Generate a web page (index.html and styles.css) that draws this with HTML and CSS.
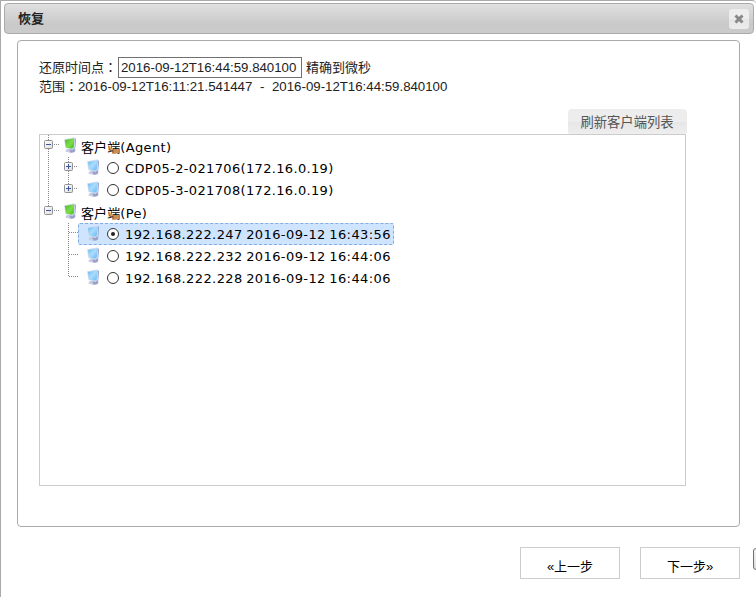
FILE: index.html
```html
<!DOCTYPE html>
<html lang="zh-CN">
<head>
<meta charset="utf-8">
<title>恢复</title>
<link rel="stylesheet" href="styles.css">
</head>
<body>
<svg class="defs" width="0" height="0">
  <defs>
    <linearGradient id="green" x1="0" y1="0" x2="1" y2="1"><stop offset="0" stop-color="#48b82c"/><stop offset=".55" stop-color="#7fdd48"/><stop offset="1" stop-color="#43bd28"/></linearGradient>
    <linearGradient id="blue" x1="0" y1="0" x2="1" y2="1"><stop offset="0" stop-color="#6bbaf0"/><stop offset=".5" stop-color="#a9dcfd"/><stop offset="1" stop-color="#67b9f2"/></linearGradient>
    <linearGradient id="box" x1="0" y1="0" x2="1" y2="1"><stop offset="0" stop-color="#fff"/><stop offset="1" stop-color="#dcdcdc"/></linearGradient>
    <symbol id="pc-body" viewBox="0 0 16 16">
      <path d="M3.6 13 L7 11 L13.7 12.2 L13 15 L9 16 L3.8 14.8Z" fill="#c9cde2"/>
      <path d="M7 12.6 L13.4 12.6 L12.4 15 L8.8 15.8Z" fill="#9c9fc8"/>
      <path d="M12 .8 L14 2 L13.4 11 L11.2 13.4 L10 12Z" fill="#979fcb"/>
      <path d="M2 2.2 L12.6 .3 L12.9 10.6 L10.6 12.7 L3.4 11.3Z" fill="#d9dfef"/>
    </symbol>
    <symbol id="pc-green" viewBox="0 0 16 16"><use href="#pc-body"/><path d="M2.9 2.9 L12 1.2 L12 9.9 L10 11.7 L4 10.5Z" fill="url(#green)"/></symbol>
    <symbol id="pc-blue" viewBox="0 0 16 16"><use href="#pc-body"/><path d="M2.9 2.9 L12 1.2 L12 9.9 L10 11.7 L4 10.5Z" fill="url(#blue)"/></symbol>
    <symbol id="minus" viewBox="0 0 9 9"><rect x=".5" y=".5" width="8" height="8" rx="1" fill="url(#box)" stroke="#919191"/><path class="sign" d="M2 4.5H7"/></symbol>
    <symbol id="plus" viewBox="0 0 9 9"><rect x=".5" y=".5" width="8" height="8" rx="1" fill="url(#box)" stroke="#919191"/><path class="sign" d="M2 4.5H7M4.5 2V7"/></symbol>
  </defs>
</svg>
<div class="dialog">
  <header class="titlebar">
    <h1>恢复</h1>
    <button class="close" aria-label="关闭"><svg width="10" height="10" viewBox="0 0 10 10"><path d="M1.5 1.5L8.5 8.5M8.5 1.5L1.5 8.5" stroke="#888" stroke-width="3"/></svg></button>
  </header>
  <main class="panel">
    <div class="time-row"><label for="point">还原时间点<span class="colon" lang="zh-TW">：</span></label><input id="point" type="text" value="2016-09-12T16:44:59.840100"><span class="hint">精确到微秒</span></div>
    <div class="range-row"><span class="range-label">范围<span class="colon" lang="zh-TW">：</span></span><span class="from">2016-09-12T16:11:21.541447</span><span class="dash">-</span><span>2016-09-12T16:44:59.840100</span></div>
    <div class="refresh-row"><button class="refresh">刷新客户端列表</button></div>
    <div class="tree">
      <div class="row root"><svg class="lines" width="22" height="22"><path d="M8.5 0V22M14 9.5H19"/><use href="#minus" x="4" y="5" width="9" height="9"/></svg><svg class="pc" width="16" height="16"><use href="#pc-green"/></svg><span class="name"><span class="cjk">客户端</span>(Agent)</span></div>
      <div class="row child"><svg class="lines" width="38" height="22"><path d="M8.5 0V22M28.5 0V22M34 9.5H38"/><use href="#plus" x="24" y="5" width="9" height="9"/></svg><div class="item"><svg class="pc" width="16" height="16"><use href="#pc-blue"/></svg><i class="radio"></i><span class="name">CDP05-2-021706(172.16.0.19)</span></div></div>
      <div class="row child"><svg class="lines" width="38" height="22"><path d="M8.5 0V22M28.5 0V10M34 9.5H38"/><use href="#plus" x="24" y="5" width="9" height="9"/></svg><div class="item"><svg class="pc" width="16" height="16"><use href="#pc-blue"/></svg><i class="radio"></i><span class="name">CDP05-3-021708(172.16.0.19)</span></div></div>
      <div class="row root"><svg class="lines" width="22" height="22"><path d="M8.5 0V10M14 9.5H19"/><use href="#minus" x="4" y="5" width="9" height="9"/></svg><svg class="pc" width="16" height="16"><use href="#pc-green"/></svg><span class="name"><span class="cjk">客户端</span>(Pe)</span></div>
      <div class="row child"><svg class="lines" width="38" height="22"><path d="M28.5 0V22M29 9.5H38"/></svg><div class="item selected"><svg class="pc" width="16" height="16"><use href="#pc-blue"/></svg><i class="radio checked"></i><span class="name host">192.168.222.247 2016-09-12 16:43:56</span></div></div>
      <div class="row child"><svg class="lines" width="38" height="22"><path d="M28.5 0V22M29 9.5H38"/></svg><div class="item"><svg class="pc" width="16" height="16"><use href="#pc-blue"/></svg><i class="radio"></i><span class="name host">192.168.222.232 2016-09-12 16:44:06</span></div></div>
      <div class="row child"><svg class="lines" width="38" height="22"><path d="M28.5 0V10M29 9.5H38"/></svg><div class="item"><svg class="pc" width="16" height="16"><use href="#pc-blue"/></svg><i class="radio"></i><span class="name host">192.168.222.228 2016-09-12 16:44:06</span></div></div>
    </div>
  </main>
  <footer class="actions">
    <button class="step">«上一步</button>
    <button class="step">下一步»</button>
    <span class="edge"></span>
  </footer>
</div>
</body>
</html>
```

FILE: styles.css
```css
* { box-sizing: border-box; }
body {
  margin: 0;
  background: #fff;
  color: #222;
  font: 13.25px/19px "Liberation Sans", "Noto Sans CJK SC", sans-serif;
  overflow: hidden;
}
button { font: inherit; padding: 0; }
svg { display: block; flex: none; }
.defs { position: absolute; }
.dialog {
  width: 756px;
  height: 597px;
  padding: 2px 2px 0 3px;
  border: 1px solid #aaa;
  border-right: 0;
  border-bottom: 0;
  border-top-right-radius: 4px;
  overflow: hidden;
}
.titlebar {
  display: flex;
  align-items: center;
  justify-content: space-between;
  width: 750px;
  height: 31px;
  padding: 0 4px 0 13px;
  border: 1px solid #aaa;
  border-radius: 4px;
  background: linear-gradient(#e0e0e0, #c9c9c9 70%, #cbcbcb);
}
h1 { margin: 0; font-size: 13px; line-height: 19px; font-weight: bold; }
.close {
  display: grid;
  place-items: center;
  width: 20px;
  height: 20px;
  border: 0;
  border-radius: 3px;
  background: linear-gradient(#ededed 50%, #e6e6e6 50%, #ececec);
}
.panel {
  width: 723px;
  height: 487px;
  margin: 6px 0 0 13px;
  padding: 16px 21px 0;
  border: 1px solid #aaa;
  border-radius: 4px;
}
.time-row, .range-row { display: flex; align-items: center; white-space: nowrap; }
.time-row { height: 21px; }
.time-row label { width: 79px; font-size: 13px; }
.colon { font-family: "Noto Sans CJK TC", sans-serif; line-height: 1; }
.hint { margin-left: 4px; font-size: 13px; }
.time-row input {
  width: 184px;
  height: 21px;
  padding: 0 2px;
  border: 1px solid #707070;
  background: #fff;
  color: #222;
  font: inherit;
}
.range-row { height: 17px; }
.range-label { width: 39px; font-size: 13px; }
.from { width: 182px; }
.dash { width: 12px; }
.refresh-row { display: flex; justify-content: flex-end; width: 648px; margin-top: 14px; }
.refresh {
  width: 119px;
  height: 25px;
  padding: 2px 1px 0 0;
  border: 0;
  border-radius: 4px 4px 2px 2px;
  background: linear-gradient(#ededed 50%, #e6e6e6 50%, #eee);
  color: #555;
  font-size: 13.3px;
}
.tree {
  width: 647px;
  height: 352px;
  border: 1px solid #ccc;
  color: #000;
  font: 13px/22px "DejaVu Sans", "Noto Sans CJK SC", sans-serif;
}
.row { display: flex; height: 22px; }
.lines { fill: none; stroke: #888; stroke-width: 1; }
.lines path { stroke-dasharray: 1 1; }
.sign { stroke: #3c56a0; stroke-dasharray: none !important; }
.pc { margin-top: 2px; }
.name { letter-spacing: .34px; white-space: nowrap; }
.host { letter-spacing: .4px; word-spacing: -1px; }
.root .name { margin: 1px 0 0 3px; }
.cjk { font-family: "Noto Sans CJK SC", sans-serif; letter-spacing: .1px; }
.item {
  display: flex;
  height: 22px;
  padding: 0 2px 0 6px;
  border: 1px solid transparent;
  border-radius: 2px;
  line-height: 22px;
}
.item .pc { margin-top: 1px; }
.selected { width: 316px; padding-right: 0; border: 1px dashed #84acdd; background: #cfe4fe; }
.radio {
  display: grid;
  flex: none;
  place-items: center;
  width: 12px;
  height: 12px;
  margin: 4px 6px 0 6px;
  border: 1px solid #333;
  border-radius: 50%;
  background: #fff;
}
.checked::after { content: ""; width: 4px; height: 4px; border-radius: 50%; background: #222; }
.actions { display: flex; gap: 20px; margin: 20px 0 0 516px; }
.step {
  flex: none;
  width: 100px;
  height: 32px;
  padding: 6px 0 0;
  border: 1px solid #ccc;
  background: #fff;
  color: #000;
  font-size: 13px;
}
.edge {
  flex: none;
  width: 12px;
  height: 22px;
  margin: 1px 0 0 -7px;
  border: 1px solid #707070;
  border-radius: 3px;
  background: linear-gradient(#f4f4f4, #ddd);
}
```
